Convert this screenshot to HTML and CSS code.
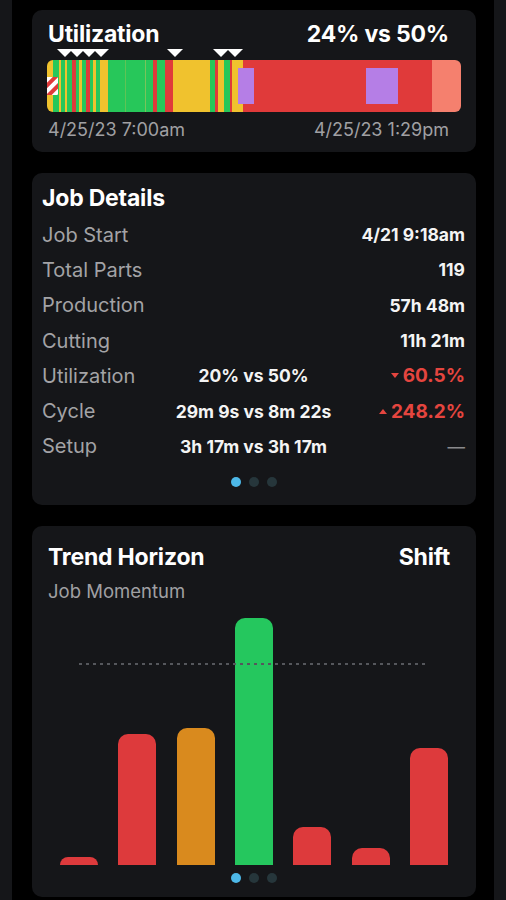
FILE: index.html
```html
<!DOCTYPE html>
<html lang="en">
<head>
<meta charset="utf-8">
<title>Job Dashboard</title>
<link rel="stylesheet" href="styles.css">
</head>
<body>
<div class="screen">
  <div class="peek"></div>
  <main class="column">
    <section class="card util">
      <div class="util-head">
        <h2 class="title">Utilization</h2>
        <span class="title">24% vs 50%</span>
      </div>
      <svg class="markers" viewBox="0 0 414 8" width="414" height="8" aria-hidden="true">
        <g fill="#ffffff">
          <polygon points="10,0 26,0 18,8"/>
          <polygon points="22,0 38,0 30,8"/>
          <polygon points="34,0 50,0 42,8"/>
          <polygon points="46,0 62,0 54,8"/>
          <polygon points="120,0 136,0 128,8"/>
          <polygon points="166,0 182,0 174,8"/>
          <polygon points="180,0 196,0 188,8"/>
        </g>
      </svg>
      <svg class="timeline" viewBox="0 0 414 52" width="414" height="52" aria-hidden="true">
        <defs>
          <clipPath id="rb"><rect x="0" y="0" width="414" height="52" rx="6"/></clipPath>
          <pattern id="hatch" width="8" height="8" patternUnits="userSpaceOnUse" patternTransform="rotate(45)">
            <rect width="8" height="8" fill="#ffffff"/>
            <rect width="4" height="8" fill="#e03a3a"/>
          </pattern>
        </defs>
        <g clip-path="url(#rb)">
          <rect x="0" y="0" width="6" height="52" fill="#f0c22e"/>
          <rect x="6" y="0" width="6" height="52" fill="#27c75a"/>
          <rect x="12" y="0" width="2" height="52" fill="#f0c22e"/>
          <rect x="14" y="0" width="4" height="52" fill="#27c75a"/>
          <rect x="18" y="0" width="2" height="52" fill="#f0c22e"/>
          <rect x="20" y="0" width="5" height="52" fill="#27c75a"/>
          <rect x="25" y="0" width="4" height="52" fill="#e03a3a"/>
          <rect x="29" y="0" width="3" height="52" fill="#27c75a"/>
          <rect x="32" y="0" width="3" height="52" fill="#f0c22e"/>
          <rect x="35" y="0" width="4" height="52" fill="#27c75a"/>
          <rect x="39" y="0" width="4" height="52" fill="#e03a3a"/>
          <rect x="43" y="0" width="3" height="52" fill="#27c75a"/>
          <rect x="46" y="0" width="3" height="52" fill="#f0c22e"/>
          <rect x="49" y="0" width="4" height="52" fill="#27c75a"/>
          <rect x="53" y="0" width="8" height="52" fill="#f0c22e"/>
          <rect x="61" y="0" width="45" height="52" fill="#27c75a"/>
          <rect x="78" y="0" width="1" height="52" fill="#5fc455"/>
          <rect x="98" y="0" width="1" height="52" fill="#7ac45a"/>
          <rect x="106" y="0" width="4" height="52" fill="#e03a3a"/>
          <rect x="110" y="0" width="8" height="52" fill="#27c75a"/>
          <rect x="118" y="0" width="8" height="52" fill="#e03a3a"/>
          <rect x="126" y="0" width="37" height="52" fill="#f0c22e"/>
          <rect x="163" y="0" width="5" height="52" fill="#27c75a"/>
          <rect x="168" y="0" width="3" height="52" fill="#e03a3a"/>
          <rect x="171" y="0" width="6" height="52" fill="#f0c22e"/>
          <rect x="177" y="0" width="6" height="52" fill="#27c75a"/>
          <rect x="183" y="0" width="2" height="52" fill="#e03a3a"/>
          <rect x="185" y="0" width="11" height="52" fill="#f0c22e"/>
          <rect x="196" y="0" width="189" height="52" fill="#e03a3a"/>
          <rect x="385" y="0" width="29" height="52" fill="#f5806e"/>
          <rect x="191" y="8" width="16" height="36" fill="#b57ee6"/>
          <rect x="319" y="8" width="32" height="36" fill="#b57ee6"/>
          <rect x="0" y="17" width="11" height="18" fill="url(#hatch)"/>
        </g>
      </svg>
      <div class="util-dates">
        <span>4/25/23 7:00am</span>
        <span>4/25/23 1:29pm</span>
      </div>
    </section>

    <section class="card details">
      <h2 class="title">Job Details</h2>
      <div class="rows">
        <span class="lbl">Job Start</span><span class="mid"></span><span class="val">4/21 9:18am</span>
        <span class="lbl">Total Parts</span><span class="mid"></span><span class="val">119</span>
        <span class="lbl">Production</span><span class="mid"></span><span class="val">57h 48m</span>
        <span class="lbl">Cutting</span><span class="mid"></span><span class="val">11h 21m</span>
        <span class="lbl">Utilization</span><span class="mid">20% vs 50%</span>
        <span class="val bad"><svg class="arrow" viewBox="0 0 8 5" width="8" height="5"><polygon points="0,0 8,0 4,5" fill="currentColor"/></svg>60.5%</span>
        <span class="lbl">Cycle</span><span class="mid">29m 9s vs 8m 22s</span>
        <span class="val bad"><svg class="arrow" viewBox="0 0 8 5" width="8" height="5"><polygon points="0,5 8,5 4,0" fill="currentColor"/></svg>248.2%</span>
        <span class="lbl">Setup</span><span class="mid">3h 17m vs 3h 17m</span><span class="val none">—</span>
      </div>
      <div class="dots"><i class="on"></i><i></i><i></i></div>
    </section>

    <section class="card trend">
      <div class="trend-head">
        <h2 class="title">Trend Horizon</h2>
        <span class="title">Shift</span>
      </div>
      <div class="subtitle">Job Momentum</div>
      <div class="chart">
        <div class="target"></div>
        <div class="slot"><div class="bar red" style="height:8px"></div></div>
        <div class="slot"><div class="bar red" style="height:131px"></div></div>
        <div class="slot"><div class="bar orange" style="height:137px"></div></div>
        <div class="slot"><div class="bar green" style="height:247px"></div></div>
        <div class="slot"><div class="bar red" style="height:38px"></div></div>
        <div class="slot"><div class="bar red" style="height:17px"></div></div>
        <div class="slot"><div class="bar red" style="height:117px"></div></div>
      </div>
      <div class="dots"><i class="on"></i><i></i><i></i></div>
    </section>
  </main>
  <div class="peek"></div>
</div>
</body>
</html>
```

FILE: styles.css
```css
* { box-sizing: border-box; }

html, body {
  margin: 0;
  padding: 0;
  background: #000;
}

body {
  font-family: Inter, "Noto Sans", "Liberation Sans", sans-serif;
  color: #fff;
}

.screen {
  display: flex;
  width: 506px;
  height: 900px;
  overflow: hidden;
}

.peek {
  flex: none;
  width: 12px;
  background: #151619;
}

.column {
  flex: none;
  width: 444px;
  margin: 0 18px 0 20px;
  padding-top: 10px;
  display: flex;
  flex-direction: column;
  gap: 21px;
}

.card {
  flex: none;
  background: #151619;
  border-radius: 10px;
}

.title {
  margin: 0;
  font-size: 23px;
  line-height: 26px;
  font-weight: 700;
  color: #fff;
  letter-spacing: -0.2px;
}

/* Utilization card */
.util {
  padding: 11px 15px 12px 15px;
}

.util-head {
  display: flex;
  justify-content: space-between;
  align-items: center;
  padding: 0 12px 0 1px;
}

.markers {
  display: block;
  margin-top: 2px;
}

.timeline {
  display: block;
  margin-top: 3px;
}

.util-dates {
  display: flex;
  justify-content: space-between;
  margin-top: 8px;
  padding: 0 12px 0 1px;
  font-size: 18px;
  line-height: 20px;
  color: #a0a0a3;
}

/* Job details card */
.details {
  padding: 12px 11px 18px 10px;
}

.rows {
  margin-top: 6px;
  display: grid;
  grid-template-columns: 1fr auto 1fr;
  grid-auto-rows: 35.3px;
  align-items: center;
}

.lbl {
  font-size: 20px;
  color: #a3a3a6;
}

.mid {
  text-align: center;
  font-size: 17.5px;
  font-weight: 700;
  color: #f4f4f4;
}

.val {
  justify-self: end;
  display: flex;
  align-items: center;
  font-size: 17.5px;
  font-weight: 700;
  color: #f4f4f4;
}

.val.bad {
  color: #e5453f;
  font-size: 19px;
}

.val.none {
  color: #8a8a8d;
  font-weight: 400;
}

.arrow {
  display: block;
  margin-right: 4px;
}

.dots {
  display: flex;
  justify-content: center;
  gap: 8px;
  margin-top: 13px;
}

.dots i {
  display: block;
  width: 10px;
  height: 10px;
  border-radius: 50%;
  background: #26363b;
}

.dots i.on {
  background: #4db8e8;
}

/* Trend card */
.trend {
  height: 371px;
  padding: 18px 0 14px 0;
}

.trend-head {
  display: flex;
  justify-content: space-between;
  align-items: center;
  padding: 0 26px 0 16px;
}

.subtitle {
  margin-top: 10px;
  padding-left: 16px;
  font-size: 18.5px;
  line-height: 22px;
  color: #a0a0a3;
}

.chart {
  position: relative;
  height: 263px;
  margin: 0 18px;
  display: flex;
  align-items: flex-end;
}

.target {
  position: absolute;
  top: 61px;
  left: 29px;
  right: 29px;
  height: 2px;
  background: repeating-linear-gradient(to right, #55575c 0 3px, transparent 3px 7px);
}

.slot {
  flex: 1;
  display: flex;
  justify-content: center;
  align-items: flex-end;
}

.bar {
  width: 38px;
  border-radius: 10px 10px 0 0;
}

.bar.red { background: #dd3a3c; }
.bar.orange { background: #d98a1e; }
.bar.green { background: #25c75e; }

.trend .dots {
  margin-top: 8px;
}
```
